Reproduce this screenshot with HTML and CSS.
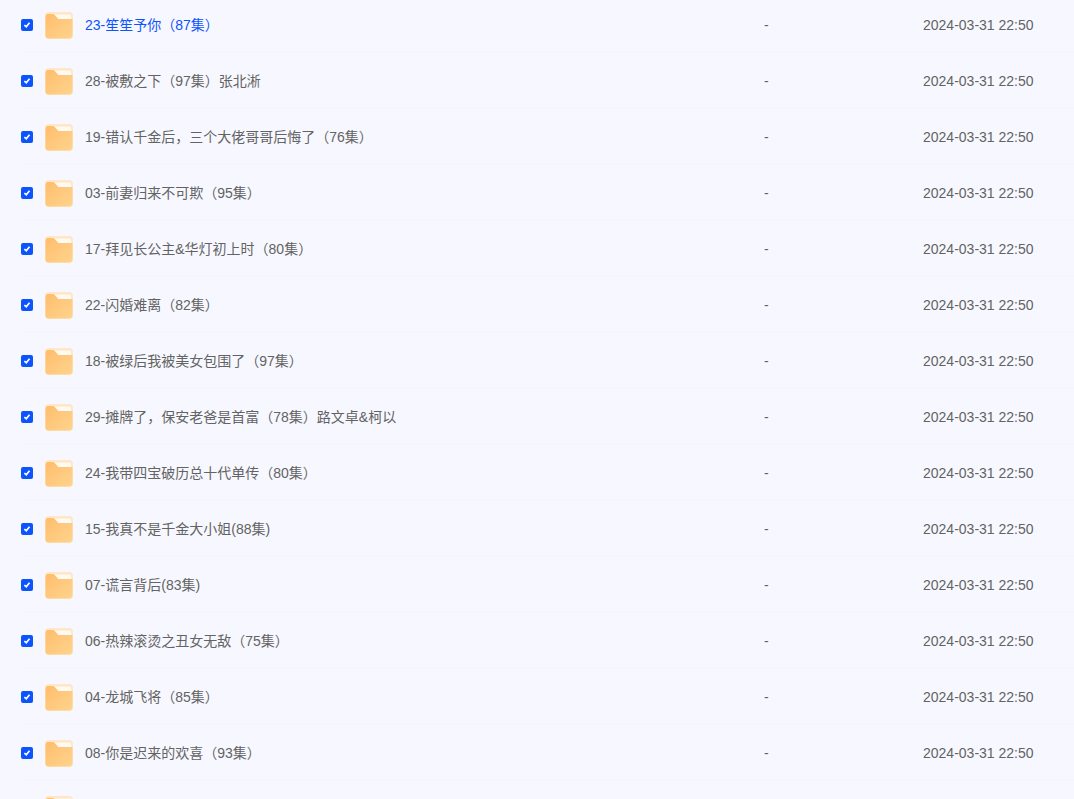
FILE: index.html
```html
<!DOCTYPE html>
<html lang="zh-CN">
<head>
<meta charset="utf-8">
<title>文件列表</title>
<link rel="stylesheet" href="styles.css">
</head>
<body>
<svg class="defs" width="0" height="0" aria-hidden="true">
  <defs>
    <linearGradient id="fg" x1="0" y1="0" x2="1" y2="1">
      <stop offset="0" stop-color="#ffbd6b"/>
      <stop offset="1" stop-color="#ffd48e"/>
    </linearGradient>
    <symbol id="folder" viewBox="0 0 28 27">
      <rect x="0" y="0" width="28" height="27" rx="4" fill="#ffe6c4"/>
      <rect x="7" y="2.500" width="19" height="6" rx="1" fill="#fffaf2"/>
      <path d="M.5 5a3 3 0 0 1 3-3H7.500a3 3 0 0 1 2 .8L13 6.500a2 2 0 0 0 1.500.6H27.500V23a3.500 3.500 0 0 1-3.500 3.500H4A3.500 3.500 0 0 1 .5 23z" fill="url(#fg)"/>
    </symbol>
  </defs>
</svg>
<main class="list">
  <div class="row"><input class="check" type="checkbox" checked><svg class="folder"><use href="#folder"/></svg><span class="name active">23-笙笙予你（87集）</span><span class="size">-</span><span class="date">2024-03-31 22:50</span></div>
  <div class="row"><input class="check" type="checkbox" checked><svg class="folder"><use href="#folder"/></svg><span class="name">28-被敷之下（97集）张北淅</span><span class="size">-</span><span class="date">2024-03-31 22:50</span></div>
  <div class="row"><input class="check" type="checkbox" checked><svg class="folder"><use href="#folder"/></svg><span class="name">19-错认千金后，三个大佬哥哥后悔了（76集）</span><span class="size">-</span><span class="date">2024-03-31 22:50</span></div>
  <div class="row"><input class="check" type="checkbox" checked><svg class="folder"><use href="#folder"/></svg><span class="name">03-前妻归来不可欺（95集）</span><span class="size">-</span><span class="date">2024-03-31 22:50</span></div>
  <div class="row"><input class="check" type="checkbox" checked><svg class="folder"><use href="#folder"/></svg><span class="name">17-拜见长公主&amp;华灯初上时（80集）</span><span class="size">-</span><span class="date">2024-03-31 22:50</span></div>
  <div class="row"><input class="check" type="checkbox" checked><svg class="folder"><use href="#folder"/></svg><span class="name">22-闪婚难离（82集）</span><span class="size">-</span><span class="date">2024-03-31 22:50</span></div>
  <div class="row"><input class="check" type="checkbox" checked><svg class="folder"><use href="#folder"/></svg><span class="name">18-被绿后我被美女包围了（97集）</span><span class="size">-</span><span class="date">2024-03-31 22:50</span></div>
  <div class="row"><input class="check" type="checkbox" checked><svg class="folder"><use href="#folder"/></svg><span class="name">29-摊牌了，保安老爸是首富（78集）路文卓&amp;柯以</span><span class="size">-</span><span class="date">2024-03-31 22:50</span></div>
  <div class="row"><input class="check" type="checkbox" checked><svg class="folder"><use href="#folder"/></svg><span class="name">24-我带四宝破历总十代单传（80集）</span><span class="size">-</span><span class="date">2024-03-31 22:50</span></div>
  <div class="row"><input class="check" type="checkbox" checked><svg class="folder"><use href="#folder"/></svg><span class="name">15-我真不是千金大小姐(88集)</span><span class="size">-</span><span class="date">2024-03-31 22:50</span></div>
  <div class="row"><input class="check" type="checkbox" checked><svg class="folder"><use href="#folder"/></svg><span class="name">07-谎言背后(83集)</span><span class="size">-</span><span class="date">2024-03-31 22:50</span></div>
  <div class="row"><input class="check" type="checkbox" checked><svg class="folder"><use href="#folder"/></svg><span class="name">06-热辣滚烫之丑女无敌（75集）</span><span class="size">-</span><span class="date">2024-03-31 22:50</span></div>
  <div class="row"><input class="check" type="checkbox" checked><svg class="folder"><use href="#folder"/></svg><span class="name">04-龙城飞将（85集）</span><span class="size">-</span><span class="date">2024-03-31 22:50</span></div>
  <div class="row"><input class="check" type="checkbox" checked><svg class="folder"><use href="#folder"/></svg><span class="name">08-你是迟来的欢喜（93集）</span><span class="size">-</span><span class="date">2024-03-31 22:50</span></div>
  <div class="row"><input class="check" type="checkbox" checked><svg class="folder"><use href="#folder"/></svg><span class="name"></span><span class="size"></span><span class="date"></span></div>
</main>
</body>
</html>
```

FILE: styles.css
```css
html, body {
  margin: 0;
  height: 100%;
  overflow: hidden;
  background: #f7f8ff;
}
body {
  font-family: "Liberation Sans", "Noto Sans CJK SC", sans-serif;
  font-size: 14px;
  color: #636363;
}
.defs {
  position: absolute;
}
.list {
  margin-top: -3px;
}
.row {
  display: flex;
  align-items: center;
  height: 56px;
  box-sizing: border-box;
  padding-left: 21px;
  position: relative;
}
.row::after {
  content: "";
  position: absolute;
  left: 21px;
  right: 0;
  bottom: 0;
  height: 1px;
  background: #f4f5fb;
}
.check {
  appearance: none;
  position: relative;
  flex: none;
  width: 12px;
  height: 12px;
  margin: 0 12px 0 0;
  border-radius: 2px;
  background: #0d53ff;
}
.check::after {
  content: "";
  position: absolute;
  left: 4px;
  top: 2px;
  width: 2px;
  height: 5px;
  border: solid #fff;
  border-width: 0 2px 2px 0;
  box-sizing: content-box;
  transform: scale(0.85) rotate(40deg);
}
.folder {
  width: 28px;
  height: 27px;
  flex: none;
  margin-right: 12px;
}
.name {
  flex: 0 0 679px;
  line-height: 20px;
}
.name.active {
  color: #0d53ff;
}
.size {
  flex: 0 0 159px;
}
.date {
  white-space: nowrap;
}
```
